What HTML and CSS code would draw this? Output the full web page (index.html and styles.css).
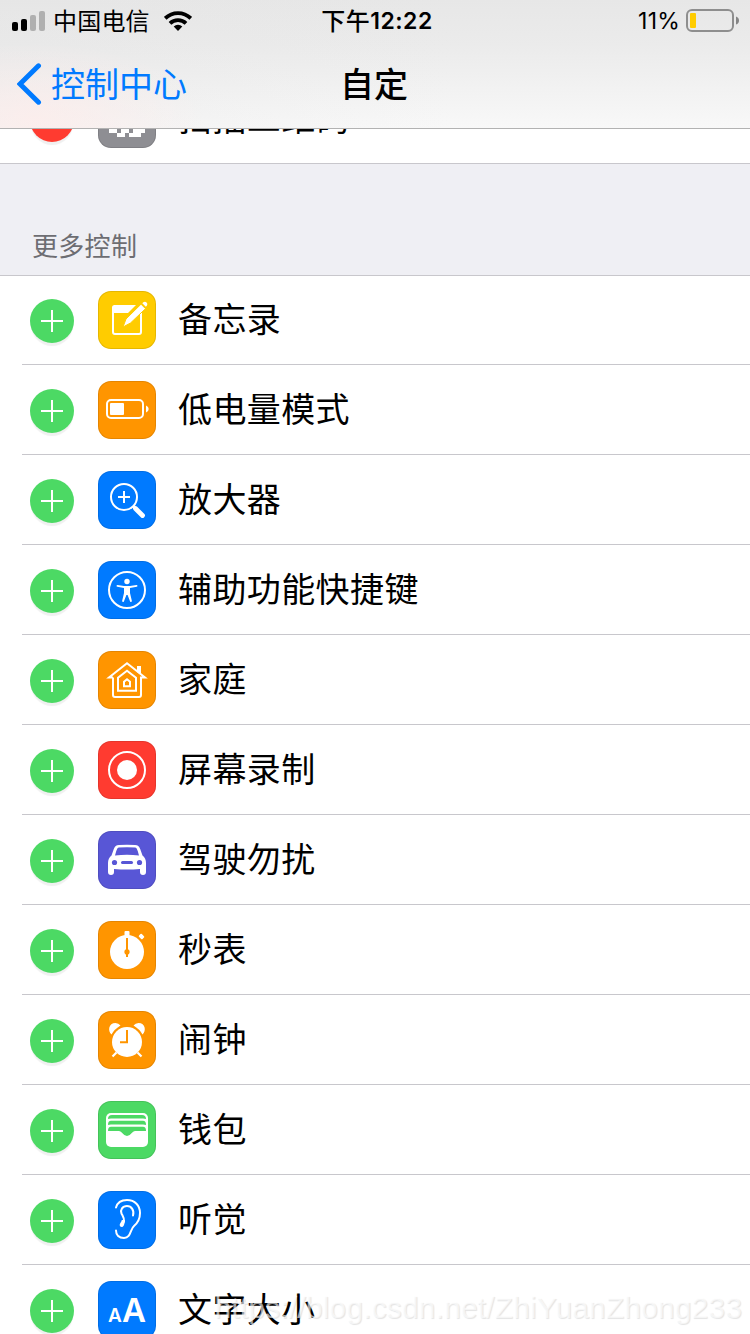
FILE: index.html
```html
<!DOCTYPE html>
<html lang="zh-CN">
<head>
<meta charset="utf-8">
<title>自定</title>
<link rel="stylesheet" href="styles.css">
</head>
<body>
<div class="screen">
  <header class="header">
    <div class="status">
      <div class="status-left">
        <svg class="signal" width="34" height="22" viewBox="0 0 34 22"><rect x="0" y="12" width="6" height="9" rx="2"/><rect x="9" y="9" width="6" height="12" rx="2"/><g fill="#b0b0b0"><rect x="18" y="5" width="6" height="16" rx="2"/><rect x="27" y="1" width="6" height="20" rx="2"/></g></svg>
        <span class="carrier">中国电信</span>
        <svg class="wifi" width="28" height="20" viewBox="0 0 28 20"><g fill="none" stroke="#000" stroke-width="3.800"><path d="M1.200 7.300a18.300 18.300 0 0 1 25.600 0"/><path d="M6 12.400a11.500 11.500 0 0 1 16 0"/></g><path d="M14 20l-4.300-4.400a6.200 6.200 0 0 1 8.600 0z"/></svg>
      </div>
      <div class="time"><span class="ampm">下午</span><span>12:22</span></div>
      <div class="status-right">
        <span class="percent">11%</span>
        <svg width="54" height="24" viewBox="0 0 54 24"><rect x="1" y="1" width="46" height="21" rx="5" fill="none" stroke="#8e8e8e" stroke-width="2"/><rect x="4" y="4" width="6" height="15" rx="1" fill="#fc0"/><path d="M50 7.500q3 1 3 4t-3 4z" fill="#858585"/></svg>
      </div>
    </div>
    <nav class="nav">
      <a class="back"><svg width="26" height="42" viewBox="0 0 26 42"><path d="M21.500 2.800L3 21l18.500 18.200" fill="none" stroke="#007aff" stroke-width="5" stroke-linecap="round" stroke-linejoin="miter"/></svg><span>控制中心</span></a>
      <h1 class="title">自定</h1>
    </nav>
  </header>

  <div class="peek">
    <div class="row">
      <span class="toggle remove"></span>
      <svg class="icon gray" viewBox="0 0 58 58"><g fill="#fff"><path d="M11 39h8v4h-8zM19 43h8v4h-8zM23 39h4v4h-4zM27 39h4v4h-4zM31 43h12v4H31zM35 39h8v4h-8zM43 39h4v4h-4z"/></g></svg>
      <span class="label">扫描二维码</span>
    </div>
  </div>
  <div class="section"><h2>更多控制</h2></div>

  <div class="list">
    <div class="row"><span class="toggle add"></span>
      <svg class="icon yellow" viewBox="0 0 58 58"><path d="M15 18v23a2 2 0 0 0 2 2h24a2 2 0 0 0 2-2V25" fill="none" stroke="#fff" stroke-width="2"/><path d="M16.500 14H38l-8 8H14v-5.500q0-2.500 2.500-2.500z" fill="#fff"/><path d="M42 22h2v3h-2z" fill="#fff"/><path d="M25 36l3-8L43 13.200l4.500 4.500L32.500 32z" fill="#fff" stroke="#fc0"/><path d="M44.300 12.300l1-1a2.500 2.500 0 0 1 3.500 3.500l-1 1z" fill="#fff"/></svg>
      <span class="label">备忘录</span></div>
    <div class="row"><span class="toggle add"></span>
      <svg class="icon orange" viewBox="0 0 58 58"><rect x="9" y="19" width="36" height="18" rx="4" fill="none" stroke="#fff" stroke-width="2"/><rect x="12" y="22" width="14" height="12" rx="1" fill="#fff"/><path d="M48 24.500q2.700 1 2.700 3.500T48 31.500z" fill="#fff"/></svg>
      <span class="label">低电量模式</span></div>
    <div class="row"><span class="toggle add"></span>
      <svg class="icon blue" viewBox="0 0 58 58"><g fill="none" stroke="#fff" stroke-width="2"><circle cx="26" cy="26" r="13"/><path d="M20 26h12M26 20v12"/><path d="M35 35l3 3" stroke-width="3"/><path d="M37.500 37.500l7 7" stroke-width="4.800" stroke-linecap="round"/></g></svg>
      <span class="label">放大器</span></div>
    <div class="row"><span class="toggle add"></span>
      <svg class="icon blue" viewBox="0 0 58 58"><circle cx="29" cy="29" r="18" fill="none" stroke="#fff" stroke-width="2"/><circle cx="29" cy="20.500" r="2.700" fill="#fff"/><path d="M19.500 24L26 25h6l6.500-1a.8.8 0 0 1 .2 1.700L32 27v5l2 8.500-1.700.6L29.600 34h-1.200l-2.700 7.100-1.700-.6 2-8.500v-5l-6.700-1.300A.8.8 0 0 1 19.500 24z" fill="#fff"/></svg>
      <span class="label">辅助功能快捷键</span></div>
    <div class="row"><span class="toggle add"></span>
      <svg class="icon orange" viewBox="0 0 58 58"><g fill="none" stroke="#fff" stroke-width="2"><path d="M15 26.500V44q0 2 2 2h24q2 0 2-2V26.500h4L29 12.300 11 26.500h4"/><path d="M20 39.700V26.800l9-7 9 7v12.900z"/><path d="M26 35.200v-4.500l3-2.500 3 2.500v4.500z"/></g><path d="M39 15h4v9l-4-3z" fill="#fff"/></svg>
      <span class="label">家庭</span></div>
    <div class="row"><span class="toggle add"></span>
      <svg class="icon red" viewBox="0 0 58 58"><circle cx="29" cy="29" r="18" fill="none" stroke="#fff" stroke-width="2"/><circle cx="29" cy="29" r="10" fill="#fff"/></svg>
      <span class="label">屏幕录制</span></div>
    <div class="row"><span class="toggle add"></span>
      <svg class="icon purple" viewBox="0 0 58 58"><path d="M18 14.800q1-.6 3-.7 8-.6 16 0 2 .1 3 .7 1.300 1 2.200 3.200l2.300 6.600q3.500 3 3.500 7.400v9a3 3 0 0 1-6 0v-3q-13 1-26 0v3a3 3 0 0 1-6 0v-9q0-4.400 3.500-7.400l2.300-6.600q.9-2.200 2.200-3.200z" fill="#fff"/><path d="M19.500 17.200q.5-.6 1.500-.7 8-.7 16 0 1 .1 1.500.7 1.500 2.500 2.500 7.300-12-1.300-24 0 1-4.800 2.500-7.300z" fill="#5856d6"/><g fill="#5856d6"><circle cx="16.500" cy="31.500" r="2.600"/><circle cx="41.500" cy="31.500" r="2.600"/><rect x="23" y="30" width="12" height="3" rx="1.500"/></g></svg>
      <span class="label">驾驶勿扰</span></div>
    <div class="row"><span class="toggle add"></span>
      <svg class="icon orange" viewBox="0 0 58 58"><g fill="#fff"><circle cx="29" cy="31" r="17"/><rect x="26.500" y="10" width="5" height="6" rx="1"/><rect x="41" y="13.500" width="5" height="4" rx="1" transform="rotate(45 43.500 15.500)"/></g><path d="M28 17h2v11.300a3 3 0 0 1 0 5.400V36h-2v-2.300a3 3 0 0 1 0-5.400z" fill="#ff9500"/></svg>
      <span class="label">秒表</span></div>
    <div class="row"><span class="toggle add"></span>
      <svg class="icon orange" viewBox="0 0 58 58"><g fill="#fff"><circle cx="29" cy="31" r="15"/><path d="M13.500 23.500C9.500 20 10.500 12 17.500 12q3 0 5 2.500-6 3.500-9 9zM44.500 23.500C48.500 20 47.500 12 40.500 12q-3 0-5 2.500 6 3.500 9 9z"/></g><path d="M18.500 41.500L14.500 45.500M39.500 41.500l4 4" stroke="#fff" stroke-width="2.200"/><path d="M29 19v12.200h-7" fill="none" stroke="#ff9500" stroke-width="2"/></svg>
      <span class="label">闹钟</span></div>
    <div class="row"><span class="toggle add"></span>
      <svg class="icon green" viewBox="0 0 58 58"><rect x="8" y="12" width="42" height="34" rx="5" fill="#fff"/><g fill="#4cd964"><path d="M10 18q0-4 4-4h30q4 0 4 4-1-.5-3-.5H13q-2 0-3 .5z"/><path d="M10 24q0-4.200 3-4.200h32q3 0 3 4.200-1-.5-3-.5H13q-2 0-3 .5z"/><path d="M10 30q0-4.200 3-4.200h32q3 0 3 4.200H37q-1.500 0-2.700 1.500-2.800 3.500-5.300 3.500t-5.300-3.500Q22.500 30 21 30z"/></g></svg>
      <span class="label">钱包</span></div>
    <div class="row"><span class="toggle add"></span>
      <svg class="icon blue" viewBox="0 0 58 58"><g fill="none" stroke="#fff" stroke-width="2" stroke-linecap="round"><path d="M18 16.500C19.500 11 24 9 29 9c8 0 13 5.500 13 13 0 6-2.500 10-6 13-4 3.500-3 12-10 12-5 0-8-3-8-7.500"/><path d="M35 24.500c1.500-5-1.500-9.500-6-9.500s-7 4-5.500 7.500c1.500 3 3 4.500 2.500 8"/></g><path d="M23.800 29h3.200c0 2-.8 6-2.300 6.800-1.700.8-3.500-.8-2.900-2.600.5-1.400 1.700-2.200 2-4.200z" fill="#fff"/></svg>
      <span class="label">听觉</span></div>
    <div class="row"><span class="toggle add"></span>
      <span class="icon blue text-size"><span class="small-a">A</span><span class="large-a">A</span></span>
      <span class="label">文字大小</span></div>
  </div>
  <div class="watermark">https://blog.csdn.net/ZhiYuanZhong233</div>
</div>
</body>
</html>
```
FILE: styles.css
```css
* { box-sizing: border-box; }
body { margin: 0; }
.screen {
  position: relative;
  width: 750px;
  height: 1334px;
  overflow: hidden;
  background: #fff;
  color: #000;
  font-family: "Noto Sans CJK SC", sans-serif;
}
.header {
  height: 129px;
  border-bottom: 1px solid #b2b2b2;
  background:
    radial-gradient(ellipse 170px 75px at 35px 118px, rgba(255, 236, 234, .7), rgba(255, 240, 238, 0)),
    linear-gradient(90deg, rgba(228, 228, 228, .3), rgba(245, 245, 245, 0) 60%),
    linear-gradient(#e7e7e7, #ebebeb 35%, #f8f8f8);
}
.status {
  display: grid;
  grid-template-columns: 1fr auto 1fr;
  align-items: center;
  height: 40px;
  padding: 0 10px 0 12px;
}
.status-left, .status-right { display: flex; align-items: center; }
.status-right { justify-content: flex-end; gap: 6px; }
.carrier { margin-left: 7px; font-size: 24px; line-height: 38px; padding-bottom: 2px; letter-spacing: .2px; }
.wifi { margin-left: 14px; }
.time {
  display: flex;
  align-items: center;
  padding-left: 2px;
  font: 600 23px/40px Inter, sans-serif;
  letter-spacing: .5px;
}
.ampm { padding-bottom: 2px; font: 500 24px/38px "Noto Sans CJK SC", sans-serif; }
.percent { padding-top: 1px; font: 400 23px/40px Inter, sans-serif; letter-spacing: .2px; }
.nav {
  display: grid;
  grid-template-columns: 1fr auto 1fr;
  align-items: center;
  height: 88px;
}
.back {
  display: flex;
  align-items: center;
  gap: 8px;
  padding-left: 17px;
  color: #007aff;
  font-size: 34px;
  line-height: 48px;
}
.back span, .title { padding-bottom: 3px; }
.title { margin: 0 2px 0 0; font-size: 34px; line-height: 48px; font-weight: 500; }
.peek {
  display: flex;
  align-items: flex-end;
  height: 35px;
  overflow: hidden;
  border-bottom: 1px solid #c8c7cc;
}
.peek .row { margin-bottom: -1px; }
.section {
  height: 111px;
  padding: 61px 32px 0;
  background: #efeff4;
}
.section h2 {
  margin: 0;
  color: #6d6d72;
  font-size: 26px;
  line-height: 40px;
  font-weight: 400;
  letter-spacing: .3px;
}
.list { border-top: 1px solid #c8c7cc; }
.row {
  display: flex;
  flex: none;
  align-items: flex-start;
  height: 90px;
  padding: 16px 0 0 30px;
}
.list .row {
  background: linear-gradient(#c8c7cc, #c8c7cc) 22px 100% / 728px 1px no-repeat;
}
.list .row:first-child { height: 89px; padding-top: 15px; }
.toggle {
  flex: none;
  width: 44px;
  height: 44px;
  margin-top: 8px;
  border-radius: 50%;
  box-shadow: 0 4px 1px -1px #f0f0f0;
}
.add {
  background:
    linear-gradient(#fff, #fff) 50% 50% / 22px 2px no-repeat,
    linear-gradient(#fff, #fff) 50% 50% / 2px 22px no-repeat,
    #4cd964;
}
.remove { background: #ff3b30; }
.icon {
  flex: none;
  width: 58px;
  height: 58px;
  margin-left: 24px;
  border-radius: 13px;
  box-shadow: inset 0 0 0 1px rgba(0, 0, 0, .1);
}
.yellow { background: #fc0; }
.orange { background: #ff9500; }
.blue { background: #007aff; }
.red { background: #ff3b30; }
.purple { background: #5856d6; }
.green { background: #4cd964; }
.gray { background: #8e8e93; }
.label {
  margin-left: 22px;
  font-size: 34px;
  line-height: 54px;
  letter-spacing: .4px;
  white-space: nowrap;
}
.text-size {
  display: flex;
  align-items: baseline;
  justify-content: center;
  color: #fff;
  font-family: Inter, sans-serif;
  font-weight: 600;
  line-height: 58px;
}
.small-a { font-size: 19px; }
.large-a { font-size: 33px; }
.watermark {
  position: absolute;
  right: 8px;
  bottom: 8px;
  color: rgba(255, 255, 255, .65);
  font: 30px/36px "Liberation Sans", Arial, sans-serif;
  letter-spacing: .15px;
  text-shadow: 1px 1px 1px rgba(0, 0, 0, .11);
  white-space: nowrap;
}
```
